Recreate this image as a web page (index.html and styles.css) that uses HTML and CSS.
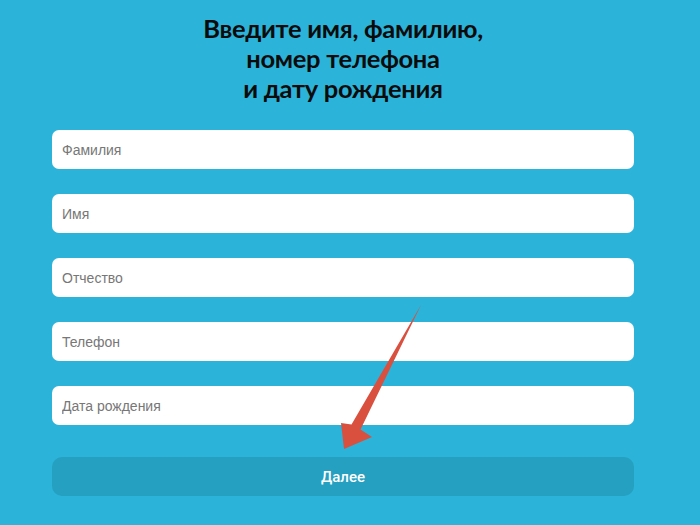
FILE: index.html
```html
<!DOCTYPE html>
<html lang="ru">
<head>
<meta charset="utf-8">
<link rel="stylesheet" href="styles.css">
</head>
<body>
<div class="page">
  <h1 class="title">Введите имя, фамилию,<br>номер телефона<br>и дату рождения</h1>
  <form class="form">
    <input class="field" type="text" placeholder="Фамилия">
    <input class="field" type="text" placeholder="Имя">
    <input class="field" type="text" placeholder="Отчество">
    <input class="field" type="text" placeholder="Телефон">
    <input class="field" type="text" placeholder="Дата рождения">
    <button class="next" type="button">Далее</button>
  </form>
  <svg class="arrow" width="700" height="525" viewBox="0 0 700 525">
    <polygon fill="#d9503f" points="421,305 360.5,429.5 372,437 344,449 341,423 351.5,424.5"/>
  </svg>
</div>
</body>
</html>
```

FILE: styles.css
```css
html, body {
  margin: 0;
  padding: 0;
}
body {
  background: #2bb3d9;
  width: 700px;
  height: 525px;
  overflow: hidden;
}
.page {
  position: relative;
  width: 700px;
  height: 525px;
}
.title {
  margin: 0;
  padding-top: 13px;
  width: 686px;
  text-align: center;
  font-family: "Lato", "Open Sans", sans-serif;
  font-weight: 700;
  font-size: 25.5px;
  line-height: 30px;
  color: #0b0b0b;
  letter-spacing: -0.3px;
}
.form {
  margin: 27px 0 0 52px;
  width: 582px;
  display: flex;
  flex-direction: column;
  gap: 25px;
}
.field {
  box-sizing: border-box;
  width: 582px;
  height: 39px;
  border: 0;
  border-radius: 7px;
  background: #ffffff;
  padding: 0 10px;
  font-family: "Liberation Sans", Arial, sans-serif;
  font-size: 14px;
  color: #333;
  outline: none;
}
.field::placeholder {
  color: #777777;
}
.next {
  margin-top: 7px;
  height: 39px;
  border: 0;
  border-radius: 10px;
  background: #25a0c0;
  color: #ffffff;
  font-family: "Roboto", sans-serif;
  font-weight: 500;
  font-size: 15px;
}
.arrow {
  position: absolute;
  left: 0;
  top: 0;
  pointer-events: none;
}
```
